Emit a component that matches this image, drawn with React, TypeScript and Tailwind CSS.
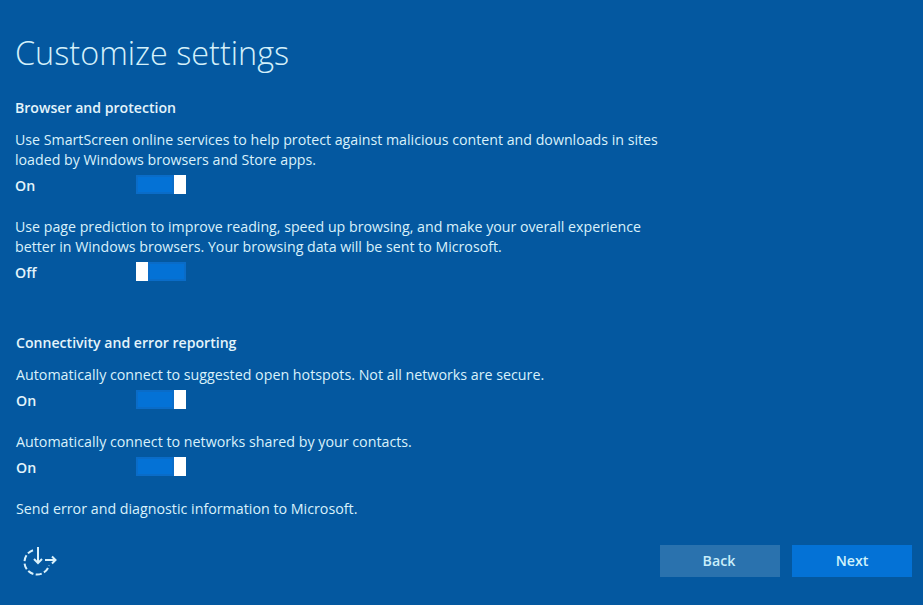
const text = "text-[#d9f1fb]";

function Toggle({ on, label, shift }: { on: boolean; label: string; shift?: boolean }) {
  return (
    <div className="flex items-start h-[20px]">
      <span className={`${shift ? "w-[121px]" : "w-[120px]"} pt-[1px] text-[14.200px] leading-[20px] font-semibold text-[#e3f4fb]`}>{label}</span>
      <div className={`flex w-[50px] h-[19px] ${on ? "flex-row" : "flex-row-reverse"}`}>
        <div className="flex-1 bg-[#0472d6] border-2 border-[#0a6cc8]" />
        <div className="w-[12px] bg-white" />
      </div>
    </div>
  );
}

function Heading({ children }: { children: string }) {
  return <div className="text-[14.100px] leading-[20px] font-semibold text-[#e3f4fb]">{children}</div>;
}

function Body({ children }: { children: React.ReactNode }) {
  return <p className={`text-[14.200px] leading-[20px] ${text}`}>{children}</p>;
}

function BodyWide({ children }: { children: React.ReactNode }) {
  return <p className={`text-[14.250px] leading-[20px] ${text}`}>{children}</p>;
}

export default function App() {
  return (
    <div
      className="w-[923px] h-[605px] bg-[#0458a0] flex flex-col overflow-hidden"
      style={{ fontFamily: '"Open Sans", "Noto Sans", sans-serif' }}
    >
      <div className="pl-[15px] pt-[30px] flex flex-col">
        <h1 className="text-[32.400px] leading-[44px] font-light text-[#d4f0fa] h-[44px]">Customize settings</h1>
        <div className="mt-[24px]"><Heading>Browser and protection</Heading></div>
        <div className="mt-[12px]">
          <Body>
            Use SmartScreen online services to help protect against malicious content and downloads in sites<br />
            loaded by Windows browsers and Store apps.
          </Body>
        </div>
        <div className="mt-[5px]"><Toggle on shift label="On" /></div>
        <div className="mt-[22px]">
          <Body>
            Use page prediction to improve reading, speed up browsing, and make your overall experience<br />
            better in Windows browsers. Your browsing data will be sent to Microsoft.
          </Body>
        </div>
        <div className="mt-[5px]"><Toggle on={false} shift label="Off" /></div>
      </div>
      <div className="pl-[16px] flex flex-col pt-[51px]">
        <Heading>Connectivity and error reporting</Heading>
        <div className="mt-[12px]"><BodyWide>Automatically connect to suggested open hotspots. Not all networks are secure.</BodyWide></div>
        <div className="mt-[5px]"><Toggle on label="On" /></div>
        <div className="mt-[22px]"><BodyWide>Automatically connect to networks shared by your contacts.</BodyWide></div>
        <div className="mt-[5px]"><Toggle on label="On" /></div>
        <div className="mt-[22px]"><BodyWide>Send error and diagnostic information to Microsoft.</BodyWide></div>
      </div>
      <div className="flex items-center justify-between pl-[22px] pr-[11px] mt-[26px]">
        <svg width="35" height="32" viewBox="0 0 35 32" fill="none" stroke="#d9f1fb" strokeWidth="2">
          <path d="M11 5.200A12.500 12.500 0 1 0 27 20.500" strokeDasharray="6 2.400" />
          <path d="M16 2V18M12 14L16 18L20 14" />
          <path d="M23 15H33.500M30 11.500L33.500 15L30 18.500" />
        </svg>
        <div className="flex gap-[12px]">
          <button className="w-[120px] h-[32px] bg-[#2a72ae] text-[14.200px] font-semibold text-[#c8eefa] pr-[2px]">Back</button>
          <button className="w-[120px] h-[32px] bg-[#0472d6] text-[14.200px] font-semibold text-[#d0f2fb]">Next</button>
        </div>
      </div>
    </div>
  );
}
